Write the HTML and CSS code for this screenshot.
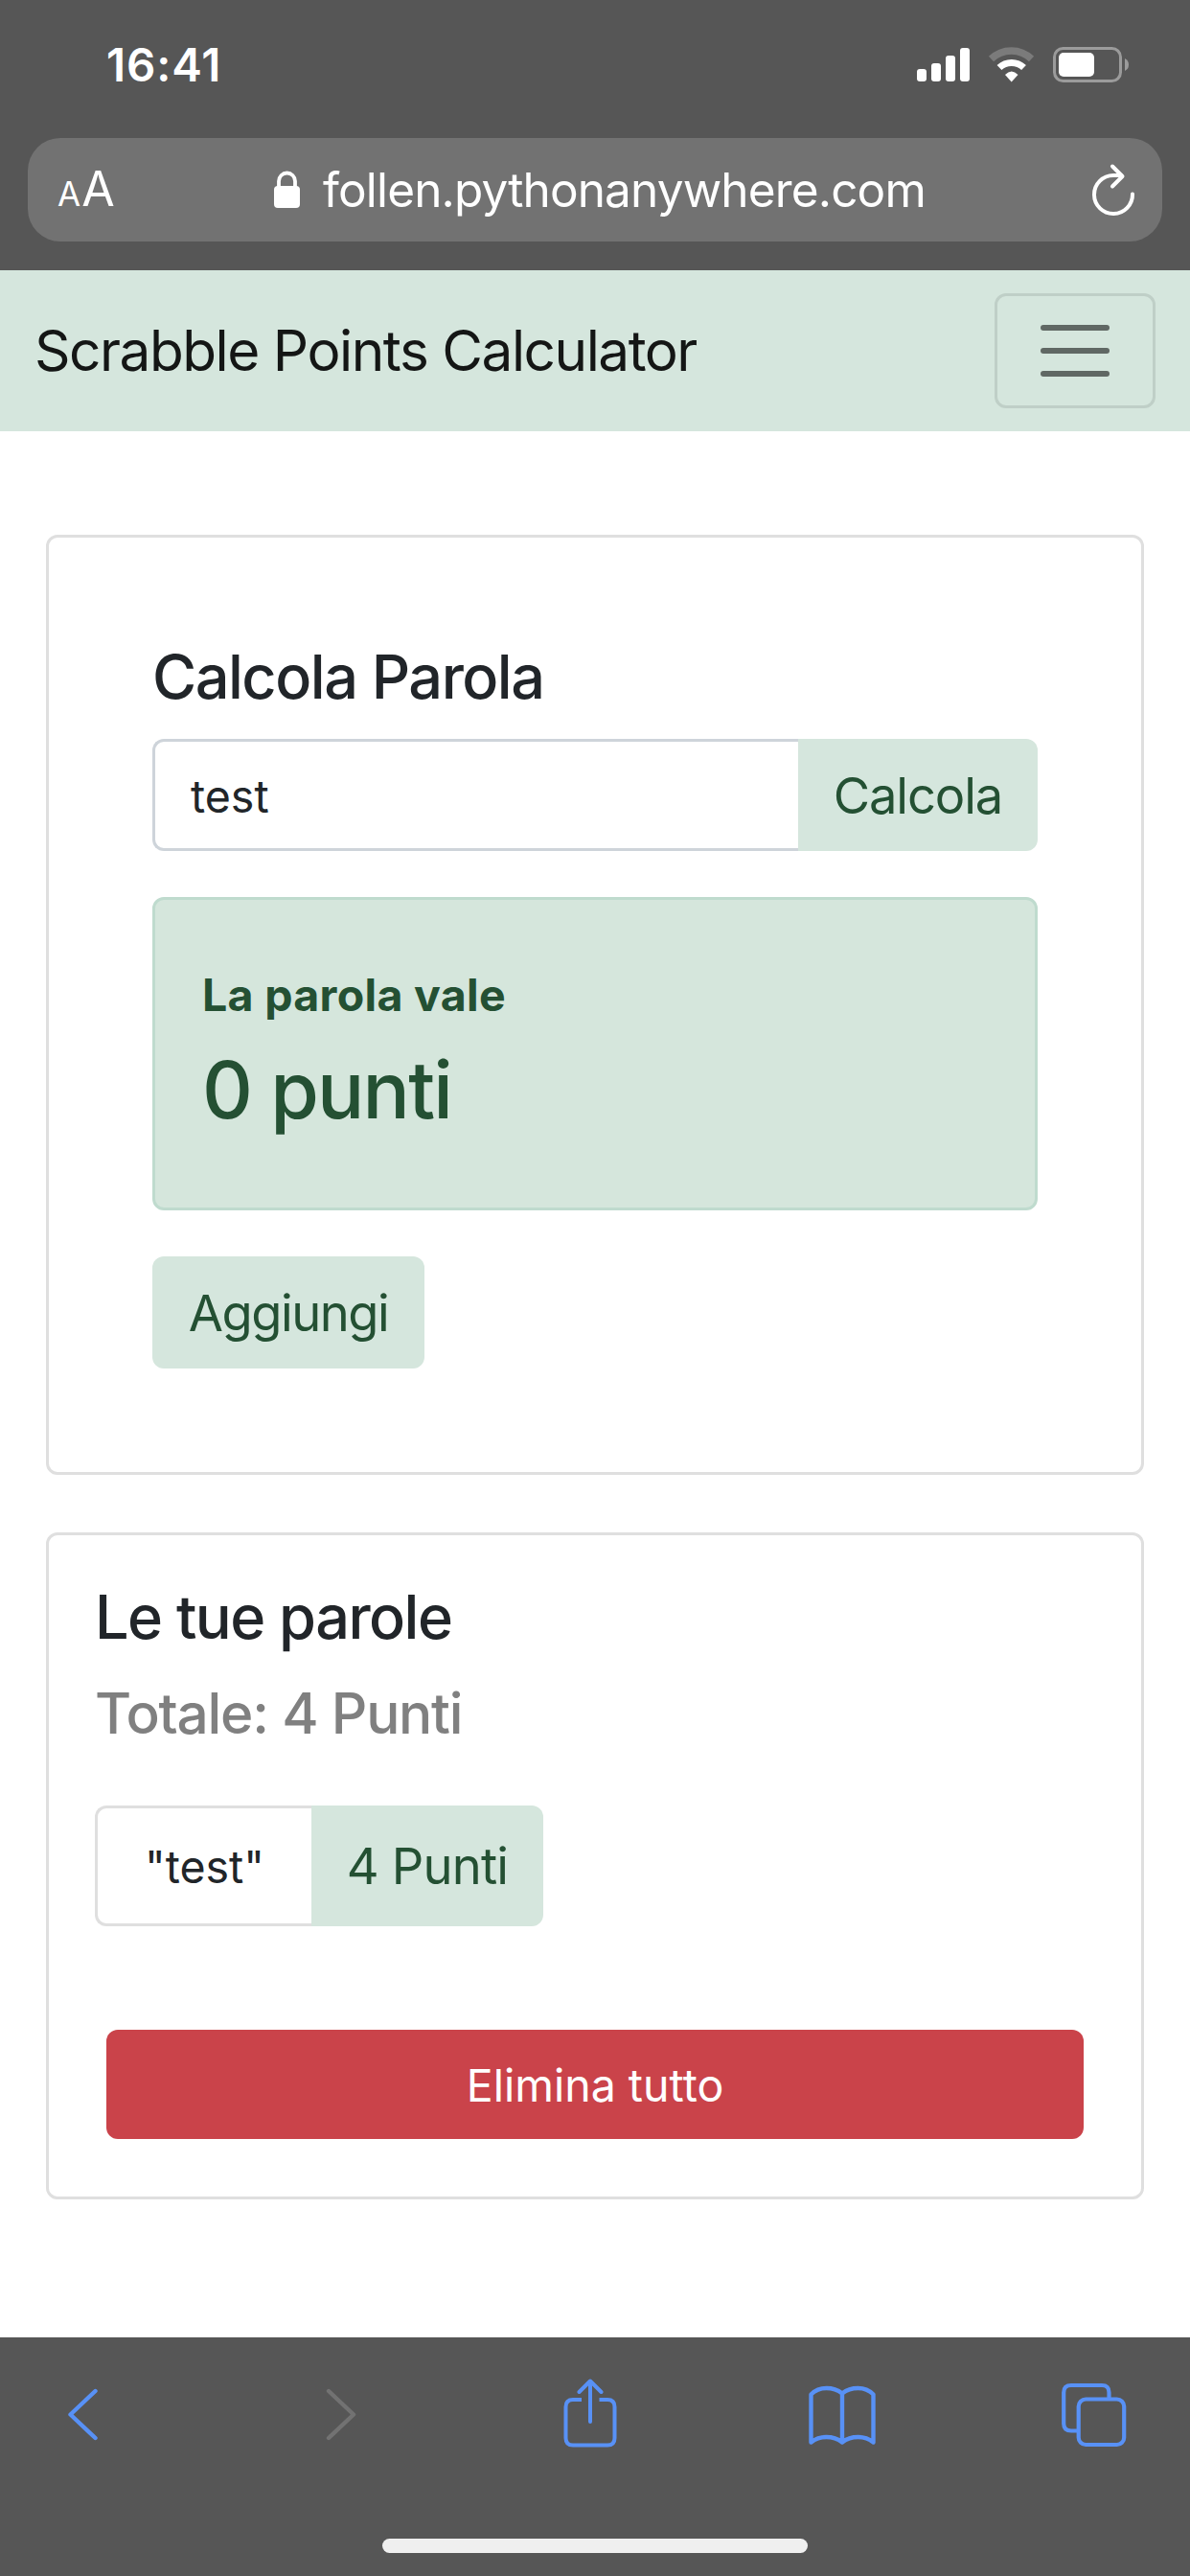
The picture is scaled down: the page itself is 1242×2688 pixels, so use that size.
FILE: index.html
```html
<!DOCTYPE html>
<html lang="it">
<head>
<meta charset="utf-8">
<title>Scrabble Points Calculator</title>
<link rel="stylesheet" href="styles.css">
</head>
<body>
<header class="browser-top">
  <div class="status">
    <span class="time t">16:41</span>
    <svg class="status-icons" width="222" height="38" viewBox="0 0 222 38">
      <g fill="#fff">
        <rect x="0" y="23" width="10" height="13" rx="3"/><rect x="15" y="17" width="10" height="19" rx="3"/><rect x="30" y="9" width="10" height="27" rx="3"/><rect x="45" y="1" width="10" height="35" rx="3"/>
      </g>
      <path d="M77.500 12.500A30 30 0 0 1 119.500 12.500" fill="none" stroke="#7b7b7b" stroke-width="7.500"/>
      <path d="M86 21.500A18.500 18.500 0 0 1 111.500 21.500" fill="none" stroke="#fff" stroke-width="7"/>
      <path d="M98.700 36.500L92 29Q98.700 22 105.500 29Z" fill="#fff"/>
      <rect x="143.500" y="1.500" width="69" height="34" rx="9" fill="none" stroke="#9b9b9b" stroke-width="3"/>
      <rect x="148" y="6" width="37" height="25" rx="5" fill="#fff"/>
      <path d="M217 12Q221 14 221 18.500Q221 23 217 25Z" fill="#9b9b9b"/>
    </svg>
  </div>
  <div class="address">
    <span class="aa"><span class="aa-small">A</span><span>A</span></span>
    <span class="url">
      <svg width="28" height="40" viewBox="0 0 28 40"><rect x="0" y="16" width="27" height="23" rx="4" fill="#fff"/><path d="M5 18V11a8.500 8.500 0 0 1 17 0v7" fill="none" stroke="#fff" stroke-width="3.800"/></svg>
      <span class="host t">follen.pythonanywhere.com</span>
    </span>
    <svg class="reload" width="46" height="56" viewBox="0 0 46 56" fill="none" stroke="#fff" stroke-width="4" stroke-linecap="round" stroke-linejoin="round"><path d="M43 32.500A20 20 0 1 1 23 13H31"/><path d="M22 3.500L32.500 14L22 24.500"/></svg>
  </div>
</header>
<nav class="navbar">
  <span class="brand t">Scrabble Points Calculator</span>
  <button class="toggler"><i></i><i></i><i></i></button>
</nav>
<main class="page">
  <section class="card calc">
    <h4 class="head"><span class="t">Calcola Parola</span></h4>
    <div class="group">
      <div class="field"><span class="small t">test</span></div>
      <button class="btn"><span class="t calcola">Calcola</span></button>
    </div>
    <div class="alert">
      <b class="vale t">La parola vale</b>
      <span class="points t">0 punti</span>
    </div>
    <button class="btn add"><span class="t aggiungi">Aggiungi</span></button>
  </section>
  <section class="card words">
    <h4 class="head"><span class="t parole">Le tue parole</span></h4>
    <h5 class="total"><span class="t">Totale: 4 Punti</span></h5>
    <div class="word">
      <div class="name"><span class="small t">"test"</span></div>
      <button class="btn"><span class="t">4 Punti</span></button>
    </div>
    <button class="delete"><span class="t">Elimina tutto</span></button>
  </section>
</main>
<footer class="browser-bottom">
  <div class="tools">
    <svg width="32" height="72" viewBox="0 0 32 72" fill="none" stroke="#5891f6" stroke-width="4.400" stroke-linecap="round" stroke-linejoin="round"><path d="M29.500 13L3.500 37.500L29.500 62"/></svg>
    <svg class="forward" width="32" height="72" viewBox="0 0 32 72" fill="none" stroke="#727272" stroke-width="4.400" stroke-linecap="round" stroke-linejoin="round"><path d="M3 13L29 37.500L3 62"/></svg>
    <svg class="share" width="58" height="72" viewBox="0 0 58 72" fill="none" stroke="#5891f6" stroke-width="4" stroke-linecap="round" stroke-linejoin="round"><path d="M19 22H10Q2.500 22 2.500 29.500V62Q2.500 69.500 10 69.500H46Q53.500 69.500 53.500 62V29.500Q53.500 22 46 22H37.500" stroke-linecap="butt"/><path d="M28 45V3M16.500 14L28 2.500L39.500 14"/></svg>
    <svg class="book" width="70" height="72" viewBox="0 0 70 72" fill="none" stroke="#5891f6" stroke-width="4.400" stroke-linecap="round" stroke-linejoin="round"><path d="M35 66.500V15.500Q28 10 18.500 10T2.500 16.500V66.500Q9 61 18.500 61T35 66.500Q42 61 51.500 61T67.500 66.500V16.500Q61 10 51.500 10T35 15.500"/></svg>
    <svg class="tabs" width="68" height="72" viewBox="0 0 68 72" fill="none" stroke="#5891f6" stroke-width="4.200"><path d="M16 54.500H10Q2.200 54.500 2.200 47V14.500Q2.200 7 10 7H42Q49.500 7 49.500 14.500V21"/><rect x="17.700" y="21.500" width="47.500" height="47.500" rx="7.500"/></svg>
  </div>
  <div class="home"></div>
</footer>
</body>
</html>
```
FILE: styles.css
```css
* { box-sizing: border-box; margin: 0; padding: 0; }
body { width: 1242px; height: 2688px; overflow: hidden; display: flex; flex-direction: column; background: #fff; color: #212529; font-family: Inter, "Liberation Sans", sans-serif; }
svg { display: block; flex: none; }
button { font: inherit; border: 0; }
.t { white-space: nowrap; }
.browser-top { height: 282px; background: #565656; color: #fff; padding: 0 29px; flex: none; }
.status { height: 144px; padding: 49px 34px 0 82px; display: flex; justify-content: space-between; align-items: flex-start; }
.time { font-size: 47.5px; line-height: 38px; font-weight: 600; letter-spacing: 0.9px; }
.address { height: 108px; border-radius: 34px; background: #727272; padding: 0 28px 0 31px; display: flex; align-items: center; }
.aa { display: flex; align-items: baseline; gap: 1px; font-size: 50px; line-height: 60px; width: 64px; font-weight: 400; padding-top: 3px; }
.aa-small { font-size: 35px; }
.url { display: flex; align-items: center; gap: 23px; margin-left: 162px; }
.host { font-size: 49.5px; line-height: 60px; letter-spacing: -0.85px; }
.reload { margin-left: auto; }
.navbar { height: 168px; flex: none; background: #d5e6dd; display: flex; align-items: center; justify-content: space-between; padding: 0 36px; }
.brand { font-size: 58.5px; line-height: 90px; color: #141615; letter-spacing: -1.48px; }
.toggler { width: 168px; height: 120px; border: 3px solid #bfcfc7; border-radius: 12px; background: none; display: flex; flex-direction: column; align-items: center; justify-content: center; gap: 18px; }
.toggler i { width: 72px; height: 6px; border-radius: 3px; background: #606864; }
.page { flex: 1; padding: 108px 48px 0; }
.card { border: 3px solid #dfdfdf; border-radius: 12px; }
.calc { height: 981px; padding: 108px; }
.head { font-size: 63px; line-height: 74px; font-weight: 500; letter-spacing: -1.5px; }
.calc .head { margin-bottom: 28px; }
.group { display: flex; height: 117px; }
.field { flex: 1; border: 3px solid #ced4da; border-right: 0; border-radius: 12px 0 0 12px; padding: 2px 0 0 37px; display: flex; align-items: center; }
.small { font-size: 46.5px; }
.btn { background: #d5e6dd; color: #245033; font-size: 52.5px; letter-spacing: -0.8px; display: flex; align-items: center; justify-content: center; }
.calcola { letter-spacing: -1.1px; }
.aggiungi { letter-spacing: -1.5px; }
.group .btn { width: 250px; border-radius: 0 12px 12px 0; }
.alert { height: 327px; margin: 48px 0; border: 3px solid #bfdbce; border-radius: 12px; background: #d5e6dc; color: #245033; padding: 63px 48px 0 49px; display: flex; flex-direction: column; }
.vale { font-size: 46.5px; line-height: 72px; font-weight: 700; letter-spacing: 0.3px; }
.points { font-size: 82px; line-height: 102px; font-weight: 500; margin-top: 13px; letter-spacing: -1.8px; }
.add { width: 284px; height: 117px; border-radius: 12px; }
.words { height: 696px; margin-top: 60px; padding: 48px; }
.total { font-size: 58.5px; line-height: 72px; font-weight: 500; color: #808080; margin-top: 28px; letter-spacing: -1.2px; }
.word { display: flex; width: 468px; height: 126px; margin-top: 60px; }
.name { width: 226px; border: 3px solid #dfdfdf; border-right: 0; border-radius: 12px 0 0 12px; padding-top: 2px; display: flex; align-items: center; justify-content: center; }
.word .btn { flex: 1; border-radius: 0 12px 12px 0; }
.delete { display: flex; align-items: center; justify-content: center; width: 1020px; height: 114px; margin: 108px 0 0 12px; border-radius: 12px; background: #ca434a; color: #fff; font-size: 46.5px; padding-top: 2px; }
.browser-bottom { height: 249px; flex: none; background: #565656; padding-top: 43px; }
.tools { height: 72px; padding-left: 70px; display: flex; }
.forward { margin-left: 238px; }
.share { margin-left: 216px; }
.book { margin-left: 198px; }
.tabs { margin-left: 194px; }
.home { width: 444px; height: 15px; margin: 95px auto 0; border-radius: 8px; background: #efefef; }
```
